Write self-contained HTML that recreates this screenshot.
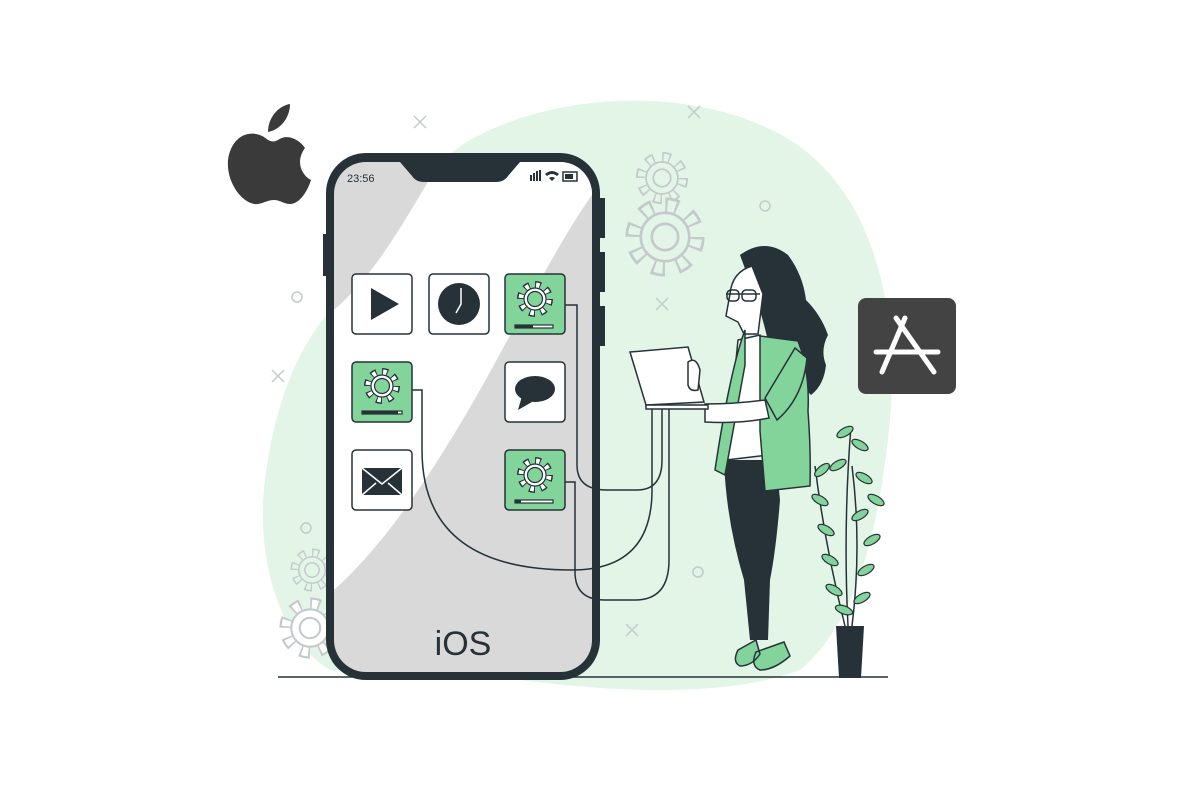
<!DOCTYPE html>
<html><head><meta charset="utf-8"><style>
html,body{margin:0;padding:0;background:#fff;width:1200px;height:800px;overflow:hidden}
</style></head><body>
<svg width="1200" height="800" viewBox="0 0 1200 800" xmlns="http://www.w3.org/2000/svg" font-family="Liberation Sans, sans-serif">
<defs>
<g id="ig">
<circle r="14" fill="none" stroke="#263238" stroke-width="8" stroke-dasharray="5.5 5.5"/>
<circle r="14" fill="none" stroke="#fff" stroke-width="5" stroke-dasharray="3.5 7.5" stroke-dashoffset="-1"/>
<circle r="11" fill="#fff" stroke="#263238" stroke-width="1.2"/>
<circle r="7.5" fill="#82d49a" stroke="#263238" stroke-width="1.2"/>
</g>
<g id="bgG">
<circle r="14" fill="none" stroke="#c4c9cb" stroke-width="8" stroke-dasharray="5.5 5.5"/>
<circle r="14" fill="none" stroke="#e2f5e7" stroke-width="5.5" stroke-dasharray="3.5 7.5" stroke-dashoffset="-1"/>
<circle r="11" fill="#e2f5e7" stroke="#c4c9cb" stroke-width="1.2"/>
<circle r="6" fill="none" stroke="#c4c9cb" stroke-width="1.2"/>
</g>
<g id="bgW">
<circle r="14" fill="none" stroke="#c4c9cb" stroke-width="8" stroke-dasharray="5.5 5.5"/>
<circle r="14" fill="none" stroke="#fff" stroke-width="5.5" stroke-dasharray="3.5 7.5" stroke-dashoffset="-1"/>
<circle r="11" fill="#fff" stroke="#c4c9cb" stroke-width="1.2"/>
<circle r="6" fill="none" stroke="#c4c9cb" stroke-width="1.2"/>
</g>
</defs>
<path d="M470 140 C560 90 700 85 790 140 C870 190 900 300 890 420 C880 520 860 620 800 670 C720 700 600 690 520 680 L330 670 C280 640 255 560 265 480 C275 400 300 340 340 300 C390 240 410 175 470 140Z" fill="#e2f5e7"/>
<line x1="278" y1="677" x2="888" y2="677" stroke="#263238" stroke-width="1.5"/>
<g stroke="#c4c9cb" stroke-width="1.5" fill="none">
<path d="M414 116l12 12M426 116l-12 12M688 106l12 12M700 106l-12 12M656 298l12 12M668 298l-12 12M272 370l12 12M284 370l-12 12M626 624l12 12M638 624l-12 12"/>
<circle cx="297" cy="297" r="5"/><circle cx="765" cy="206" r="5"/><circle cx="698" cy="572" r="5"/><circle cx="306" cy="528" r="5"/>
</g>
<use href="#bgG" transform="translate(662 178) scale(1.45)" stroke-width="0.8"/>
<use href="#bgG" transform="translate(665 237) scale(2.2)"/>
<use href="#bgG" transform="translate(312 570) scale(1.2)"/>
<use href="#bgW" transform="translate(310 628) scale(1.7)"/>
<path d="M268 140 C255 128 232 132 228 160 C226 185 245 206 258 204 C264 203 268 200 274 200 C280 200 284 204 290 204 C300 204 308 190 311 180 C300 174 296 160 305 148 C298 138 286 134 278 140 C274 142 272 142 268 140Z M268 132 C268 118 278 106 290 104 C290 118 280 130 268 132Z" fill="#3a3a3a"/>
<rect x="858" y="298" width="98" height="96" rx="8" fill="#434343"/>
<g stroke="#fff" stroke-width="5" stroke-linecap="round" fill="none">
<path d="M905 318 L882 372M896 318 L934 372M876 352 L938 352"/>
</g>
<rect x="323" y="234" width="6" height="42" fill="#263238"/>
<rect x="597" y="198" width="8" height="40" fill="#263238"/>
<rect x="597" y="252" width="8" height="40" fill="#263238"/>
<rect x="597" y="306" width="8" height="40" fill="#263238"/>
<rect x="326" y="153" width="274" height="527" rx="40" fill="#263238"/>
<clipPath id="scr"><rect x="334" y="162" width="258" height="510" rx="32"/></clipPath>
<g clip-path="url(#scr)">
<rect x="334" y="162" width="258" height="510" fill="#d9d9d9"/>
<path d="M440 162 L592 162 L592 195 C560 240 530 300 480 390 C440 460 390 540 334 590 L334 310 C380 270 410 210 440 162Z" fill="#fff"/>
<path d="M400 162 h120 l-12 14 q-4 6 -12 6 h-72 q-8 0 -12 -6z" fill="#263238"/>
</g>
<text x="347" y="182" font-size="11" fill="#263238">23:56</text>
<g fill="#263238"><rect x="530" y="175" width="2" height="6"/><rect x="533" y="173" width="2" height="8"/><rect x="536" y="171" width="2" height="10"/><rect x="539" y="170" width="2" height="11"/>
<path d="M545 174 q7 -6 14 0 l-2 2 q-5 -4 -10 0z M549 178 l3 3 3 -3 q-3 -2 -6 0z"/>
<rect x="563" y="172" width="14" height="9" fill="none" stroke="#263238" stroke-width="1.5"/><rect x="565" y="174" width="8" height="5"/></g>
<text x="463" y="655" font-size="34" fill="#263238" text-anchor="middle">iOS</text>
<g stroke="#263238" stroke-width="1.5">
<rect x="352" y="274" width="60" height="60" rx="4" fill="#fff"/>
<rect x="429" y="274" width="60" height="60" rx="4" fill="#fff"/>
<rect x="505" y="274" width="60" height="60" rx="4" fill="#82d49a"/>
<rect x="352" y="362" width="60" height="60" rx="4" fill="#82d49a"/>
<rect x="505" y="362" width="60" height="60" rx="4" fill="#fff"/>
<rect x="352" y="450" width="60" height="60" rx="4" fill="#fff"/>
<rect x="505" y="450" width="60" height="60" rx="4" fill="#82d49a"/>
</g>
<path d="M371 288 L399 304 L371 320Z" fill="#263238"/>
<circle cx="459" cy="304" r="21" fill="#263238"/><path d="M461 288 v16 l-5 9" stroke="#fff" stroke-width="1.5" fill="none"/>
<ellipse cx="535" cy="389" rx="20" ry="13" fill="#263238"/><path d="M522 396 l-4 14 l14 -8z" fill="#263238"/>
<rect x="362" y="468" width="40" height="27" fill="#263238"/><path d="M362 468 l20 16 l20 -16 M362 495 l14 -12 M402 495 l-14 -12" stroke="#fff" stroke-width="1.5" fill="none"/>
<use href="#ig" transform="translate(535 299)"/>
<use href="#ig" transform="translate(382 386)"/>
<use href="#ig" transform="translate(535 475)"/>
<g fill="#fff" stroke="#263238" stroke-width="1.2">
<rect x="515" y="325" width="38" height="3"/><rect x="362" y="411" width="40" height="3"/><rect x="515" y="500" width="38" height="3"/>
</g>
<rect x="515" y="325" width="18" height="3" fill="#263238"/><rect x="362" y="411" width="36" height="3" fill="#263238"/><rect x="515" y="500" width="6" height="3" fill="#263238"/>
<g stroke="#263238" stroke-width="1.5" fill="none">
<path d="M565 305 h12 v160 q0 25 30 25 h30 q25 0 25 -30 v-60"/>
<path d="M412 390 h10 v60 q0 120 150 120 q80 0 80 -80 v-90"/>
<path d="M565 482 h10 v90 q0 28 30 28 h30 q34 0 34 -40 v-160"/>
</g>
<path d="M740 255 q25 -18 48 0 q15 20 18 45 q15 15 22 35 q-8 15 -2 30 q-2 20 -15 30 l-40 -40 q-8 -40 -20 -70z" fill="#263238"/>
<path d="M752 266 q-20 6 -22 28 l-4 22 l12 6 l6 12 h14 l5 -40 z" fill="#fff" stroke="#263238" stroke-width="1.5"/>
<path d="M726 294 h34" stroke="#263238" stroke-width="1.5" fill="none"/>
<rect x="727" y="290" width="12" height="11" rx="4" fill="none" stroke="#263238" stroke-width="1.5"/>
<rect x="742" y="290" width="14" height="11" rx="4" fill="none" stroke="#263238" stroke-width="1.5"/>
<path d="M738 340 l22 -5 l8 120 l-42 5z" fill="#fff" stroke="#263238" stroke-width="1.5"/>
<path d="M724 460 l52 0 l4 40 q-4 50 -10 80 l-2 60 l-18 0 l-6 -60 q-18 -60 -20 -120z" fill="#263238"/>
<path d="M745 330 q-15 40 -30 140 l10 5 l20 -110z" fill="#82d49a" stroke="#263238" stroke-width="1.5"/>
<path d="M760 336 l38 5 q12 30 10 70 q3 40 2 75 l-45 5 l-5 -60z" fill="#82d49a" stroke="#263238" stroke-width="1.5"/>
<path d="M705 404 q30 0 60 -4 l4 18 q-30 6 -64 4z" fill="#fff" stroke="#263238" stroke-width="1.5"/>
<path d="M765 398 l30 -50 l12 10 q-4 40 -30 62z" fill="#82d49a" stroke="#263238" stroke-width="1.5"/>
<path d="M630 352 l58 -5 l16 55 l-58 3z" fill="#fff" stroke="#263238" stroke-width="1.5"/>
<path d="M646 405 h62 v4 h-62z" fill="#fff" stroke="#263238" stroke-width="1.5"/>
<path d="M688 362 q8 -6 12 8 l-2 20 q-8 2 -10 -5z" fill="#fff" stroke="#263238" stroke-width="1.5"/>
<path d="M738 650 q-6 12 2 16 q12 0 20 -12 l-4 -14z M756 652 q-6 14 4 18 q14 0 30 -14 l-6 -14z" fill="#82d49a" stroke="#263238" stroke-width="1.5"/>
<path d="M836 626 h28 l-3 52 h-22z" fill="#263238"/>
<g stroke="#263238" stroke-width="1.5" fill="none"><path d="M848 626 q-5 -100 3 -200 M852 626 q10 -80 0 -160 M845 626 q-20 -80 -30 -160"/></g>
<g fill="#82d49a" stroke="#263238" stroke-width="1.2">
<ellipse cx="845" cy="432" rx="9" ry="4" transform="rotate(-30 845 432)"/><ellipse cx="860" cy="445" rx="9" ry="4" transform="rotate(30 860 445)"/>
<ellipse cx="838" cy="465" rx="9" ry="4" transform="rotate(-30 838 465)"/><ellipse cx="864" cy="478" rx="9" ry="4" transform="rotate(30 864 478)"/>
<ellipse cx="822" cy="470" rx="9" ry="4" transform="rotate(-40 822 470)"/><ellipse cx="876" cy="500" rx="9" ry="4" transform="rotate(30 876 500)"/>
<ellipse cx="820" cy="500" rx="9" ry="4" transform="rotate(30 820 500)"/><ellipse cx="860" cy="515" rx="9" ry="4" transform="rotate(-30 860 515)"/>
<ellipse cx="826" cy="530" rx="9" ry="4" transform="rotate(30 826 530)"/><ellipse cx="872" cy="540" rx="9" ry="4" transform="rotate(-30 872 540)"/>
<ellipse cx="830" cy="560" rx="9" ry="4" transform="rotate(30 830 560)"/><ellipse cx="866" cy="570" rx="9" ry="4" transform="rotate(-30 866 570)"/>
<ellipse cx="834" cy="590" rx="9" ry="4" transform="rotate(30 834 590)"/><ellipse cx="862" cy="598" rx="9" ry="4" transform="rotate(-30 862 598)"/>
<ellipse cx="844" cy="610" rx="9" ry="4" transform="rotate(20 844 610)"/>
</g>
</svg>
</body></html>
